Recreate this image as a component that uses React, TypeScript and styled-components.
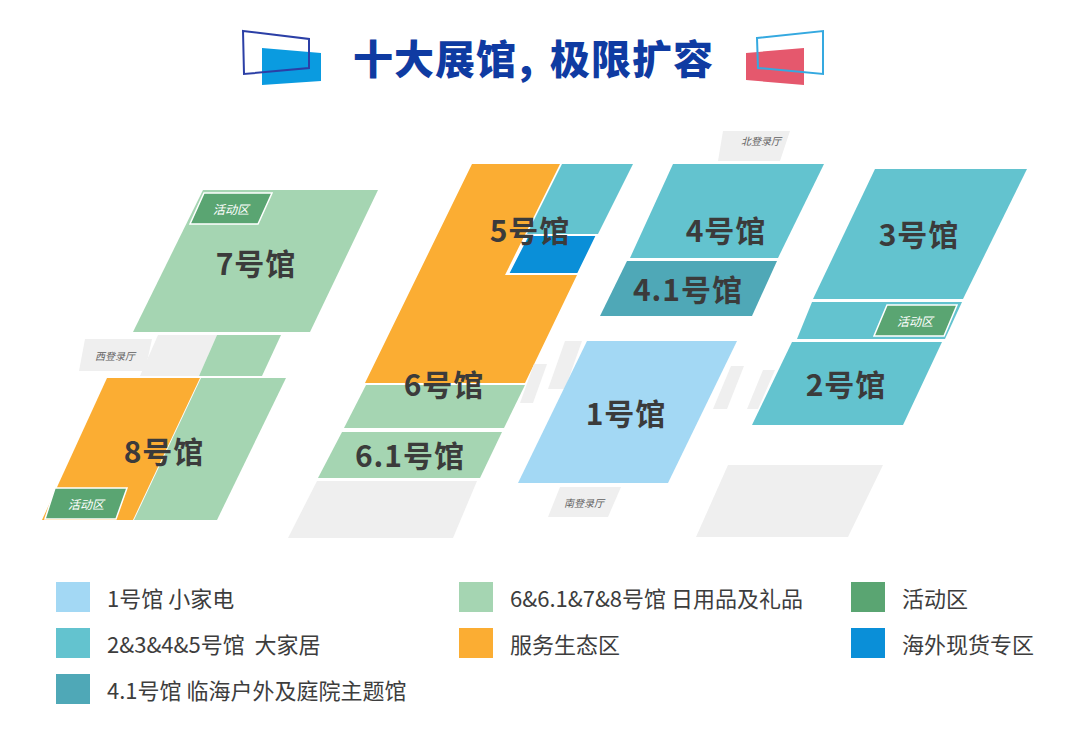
import React from 'react';
import styled, { createGlobalStyle } from 'styled-components';

const GlobalStyle = createGlobalStyle`
  html, body {
    margin: 0;
    padding: 0;
    background: #ffffff;
  }
  body {
    font-family: "Noto Sans CJK SC", "Noto Sans", sans-serif;
  }
`;

const Page = styled.div`
  width: 1079px;
  height: 751px;
  background: #ffffff;
  overflow: hidden;
  display: flex;
  flex-direction: column;
`;

const Header = styled.header`
  height: 116px;
  display: flex;
  align-items: center;
  justify-content: center;
  padding-right: 12px;
  box-sizing: border-box;
`;

const Title = styled.h1`
  margin: -2px 30px 0 30px;
  font-family: "Noto Sans CJK SC", sans-serif;
  font-size: 40px;
  font-weight: 900;
  letter-spacing: 1px;
  color: #0f3ba2;
  line-height: 1;
`;

const Comma = styled.span`
  margin: 0 17px 0 2px;
  letter-spacing: 0;
`;

const Deco = styled.svg`
  width: 82px;
  height: 58px;
  display: block;
  flex-shrink: 0;
`;

const MapCanvas = styled.svg`
  display: block;
  width: 1079px;
  height: 440px;
`;

const HallLabel = styled.text`
  font-family: "Noto Sans CJK SC", sans-serif;
  font-size: 30px;
  font-weight: 700;
  letter-spacing: 1px;
  fill: #3b3b3b;
`;

const BadgeText = styled.text`
  font-family: "Noto Sans CJK SC", sans-serif;
  font-size: 12px;
  font-style: italic;
  fill: #ffffff;
`;

const GateText = styled.text`
  font-family: "Noto Sans CJK SC", sans-serif;
  font-size: 10px;
  font-style: italic;
  fill: #606060;
`;

const Legend = styled.div`
  margin-top: 26px;
  padding-left: 56px;
  display: grid;
  grid-template-columns: 403px 392px 1fr;
  row-gap: 16px;
`;

const LegendItem = styled.div`
  display: flex;
  align-items: center;
  gap: 17px;
  height: 30px;
`;

const Swatch = styled.span<{ $color: string }>`
  width: 34px;
  height: 30px;
  background: ${(p) => p.$color};
  flex-shrink: 0;
`;

const LegendText = styled.span`
  font-family: "Noto Sans CJK SC", sans-serif;
  font-size: 22px;
  color: #3d3d3d;
  white-space: pre;
  line-height: 1;
`;

const C = {
  blue1: '#a3d8f4',
  teal: '#63c3cf',
  tealDark: '#4fa8b7',
  green: '#a5d5b2',
  orange: '#fbad33',
  active: '#5aa572',
  overseas: '#0a8fd8',
  gray: '#efefef',
};

type Pt = [number, number];
const pts = (p: Pt[]) => p.map(([x, y]) => `${x},${y}`).join(' ');

const Shape: React.FC<{ p: Pt[]; fill: string; stroke?: string }> = ({ p, fill, stroke }) => (
  <polygon points={pts(p)} fill={fill} stroke={stroke} strokeWidth={stroke ? 2 : 0} />
);

const Badge: React.FC<{ p: Pt[]; cx: number; cy: number }> = ({ p, cx, cy }) => (
  <g>
    <polygon points={pts(p)} fill={C.active} stroke="#ffffff" strokeWidth={1.5} />
    <BadgeText x={cx} y={cy} textAnchor="middle" dominantBaseline="central">
      活动区
    </BadgeText>
  </g>
);

const Gate: React.FC<{ p: Pt[]; cx: number; cy: number; label: string }> = ({ p, cx, cy, label }) => (
  <g>
    <polygon points={pts(p)} fill={C.gray} />
    <GateText x={cx} y={cy} textAnchor="middle" dominantBaseline="central">
      {label}
    </GateText>
  </g>
);

const Label: React.FC<{ x: number; y: number; children: React.ReactNode }> = ({ x, y, children }) => (
  <HallLabel x={x} y={y} textAnchor="middle" dominantBaseline="central">
    {children}
  </HallLabel>
);

const HallMap: React.FC = () => (
  <MapCanvas viewBox="0 120 1079 440">
    {/* west: 7 & 8 */}
    <Shape p={[[203, 194], [378, 194], [310, 336], [133, 336]]} fill={C.green} />
    <Badge p={[[204, 197], [272, 197], [258, 228], [190, 228]]} cx={231} cy={212} />
    <Label x={256} y={266}>7号馆</Label>

    <Shape p={[[158, 339], [217, 339], [199, 380], [140, 380]]} fill={C.gray} />
    <Shape p={[[217, 339], [281, 339], [262, 380], [199, 380]]} fill={C.green} />
    <Gate p={[[85, 343], [152, 343], [145, 375], [79, 375]]} cx={115} cy={359} label="西登录厅" />

    <Shape p={[[107, 382], [200, 382], [133, 524], [42, 524]]} fill={C.orange} />
    <Shape p={[[201, 382], [286, 382], [217, 524], [134, 524]]} fill={C.green} />
    <Badge p={[[55, 492], [127, 492], [116, 523], [45, 523]]} cx={86} cy={507} />
    <Label x={164} y={454}>8号馆</Label>

    {/* centre: 5 / 6 / 6.1 */}
    <Shape
      p={[[472, 168], [560, 168], [505, 279], [577, 279], [525, 387], [365, 387]]}
      fill={C.orange}
    />
    <Shape p={[[562, 168], [633, 168], [598, 238], [527, 238]]} fill={C.teal} />
    <Shape p={[[528, 239], [597, 239], [578, 278], [508, 278]]} fill={C.overseas} stroke="#ffffff" />
    <Label x={530} y={233}>5号馆</Label>

    <Shape p={[[366, 389], [525, 389], [504, 432], [344, 432]]} fill={C.green} />
    <Shape p={[[342, 436], [502, 436], [480, 482], [318, 482]]} fill={C.green} />
    <Shape p={[[317, 485], [477, 485], [453, 542], [288, 542]]} fill={C.gray} />
    <Label x={444} y={387}>6号馆</Label>
    <Label x={410} y={458}>6.1号馆</Label>

    {/* connectors */}
    <Shape p={[[534, 368], [547, 368], [533, 407], [520, 407]]} fill={C.gray} />
    <Shape p={[[565, 345], [582, 345], [565, 393], [548, 393]]} fill={C.gray} />
    <Shape p={[[731, 370], [744, 370], [727, 413], [713, 413]]} fill={C.gray} />
    <Shape p={[[763, 374], [775, 374], [758, 413], [747, 413]]} fill={C.gray} />

    {/* 1 */}
    <Shape p={[[587, 345], [737, 345], [668, 487], [518, 487]]} fill={C.blue1} />
    <Label x={626} y={416}>1号馆</Label>
    <Gate p={[[560, 491], [621, 491], [608, 521], [548, 521]]} cx={584} cy={506} label="南登录厅" />

    {/* 4 / 4.1 */}
    <Gate p={[[723, 135], [790, 135], [780, 165], [718, 165]]} cx={761} cy={144} label="北登录厅" />
    <Shape p={[[673, 168], [824, 168], [778, 262], [630, 262]]} fill={C.teal} />
    <Label x={726} y={233}>4号馆</Label>
    <Shape p={[[627, 265], [777, 265], [752, 320], [600, 320]]} fill={C.tealDark} />
    <Label x={688} y={292}>4.1号馆</Label>

    {/* 3 / 2 */}
    <Shape p={[[875, 173], [1027, 173], [963, 303], [813, 303]]} fill={C.teal} />
    <Label x={919} y={237}>3号馆</Label>
    <Shape p={[[812, 306], [962, 306], [945, 343], [797, 343]]} fill={C.teal} />
    <Badge p={[[887, 309], [957, 309], [944, 340], [874, 340]]} cx={915} cy={324} />
    <Shape p={[[792, 346], [942, 346], [903, 429], [752, 429]]} fill={C.teal} />
    <Label x={846} y={387}>2号馆</Label>

    <Shape p={[[728, 469], [883, 469], [848, 541], [696, 541]]} fill={C.gray} />
  </MapCanvas>
);

const legend: { color: string; text: string }[] = [
  { color: C.blue1, text: '1号馆 小家电' },
  { color: C.green, text: '6&6.1&7&8号馆 日用品及礼品' },
  { color: C.active, text: '活动区' },
  { color: C.teal, text: '2&3&4&5号馆  大家居' },
  { color: C.orange, text: '服务生态区' },
  { color: C.overseas, text: '海外现货专区' },
  { color: C.tealDark, text: '4.1号馆 临海户外及庭院主题馆' },
];

const App: React.FC = () => (
  <>
    <GlobalStyle />
    <Page>
      <Header>
        <Deco viewBox="0 0 82 58">
          <polygon points="21,19 80,24 80,52 21,56" fill="#0a9be0" />
          <polygon points="2,2 68,10 68,39 3,45" fill="none" stroke="#2b3fa6" strokeWidth={2} />
        </Deco>
        <Title>
          十大展馆<Comma>,</Comma>极限扩容
        </Title>
        <Deco viewBox="0 0 82 58">
          <polygon points="2,24 60,19 60,56 2,51" fill="#e5586d" />
          <polygon points="13,9 79,2 79,45 14,39" fill="none" stroke="#35a9e0" strokeWidth={2} />
        </Deco>
      </Header>
      <HallMap />
      <Legend>
        {legend.map((l) => (
          <LegendItem key={l.text}>
            <Swatch $color={l.color} />
            <LegendText>{l.text}</LegendText>
          </LegendItem>
        ))}
      </Legend>
    </Page>
  </>
);

export default App;
